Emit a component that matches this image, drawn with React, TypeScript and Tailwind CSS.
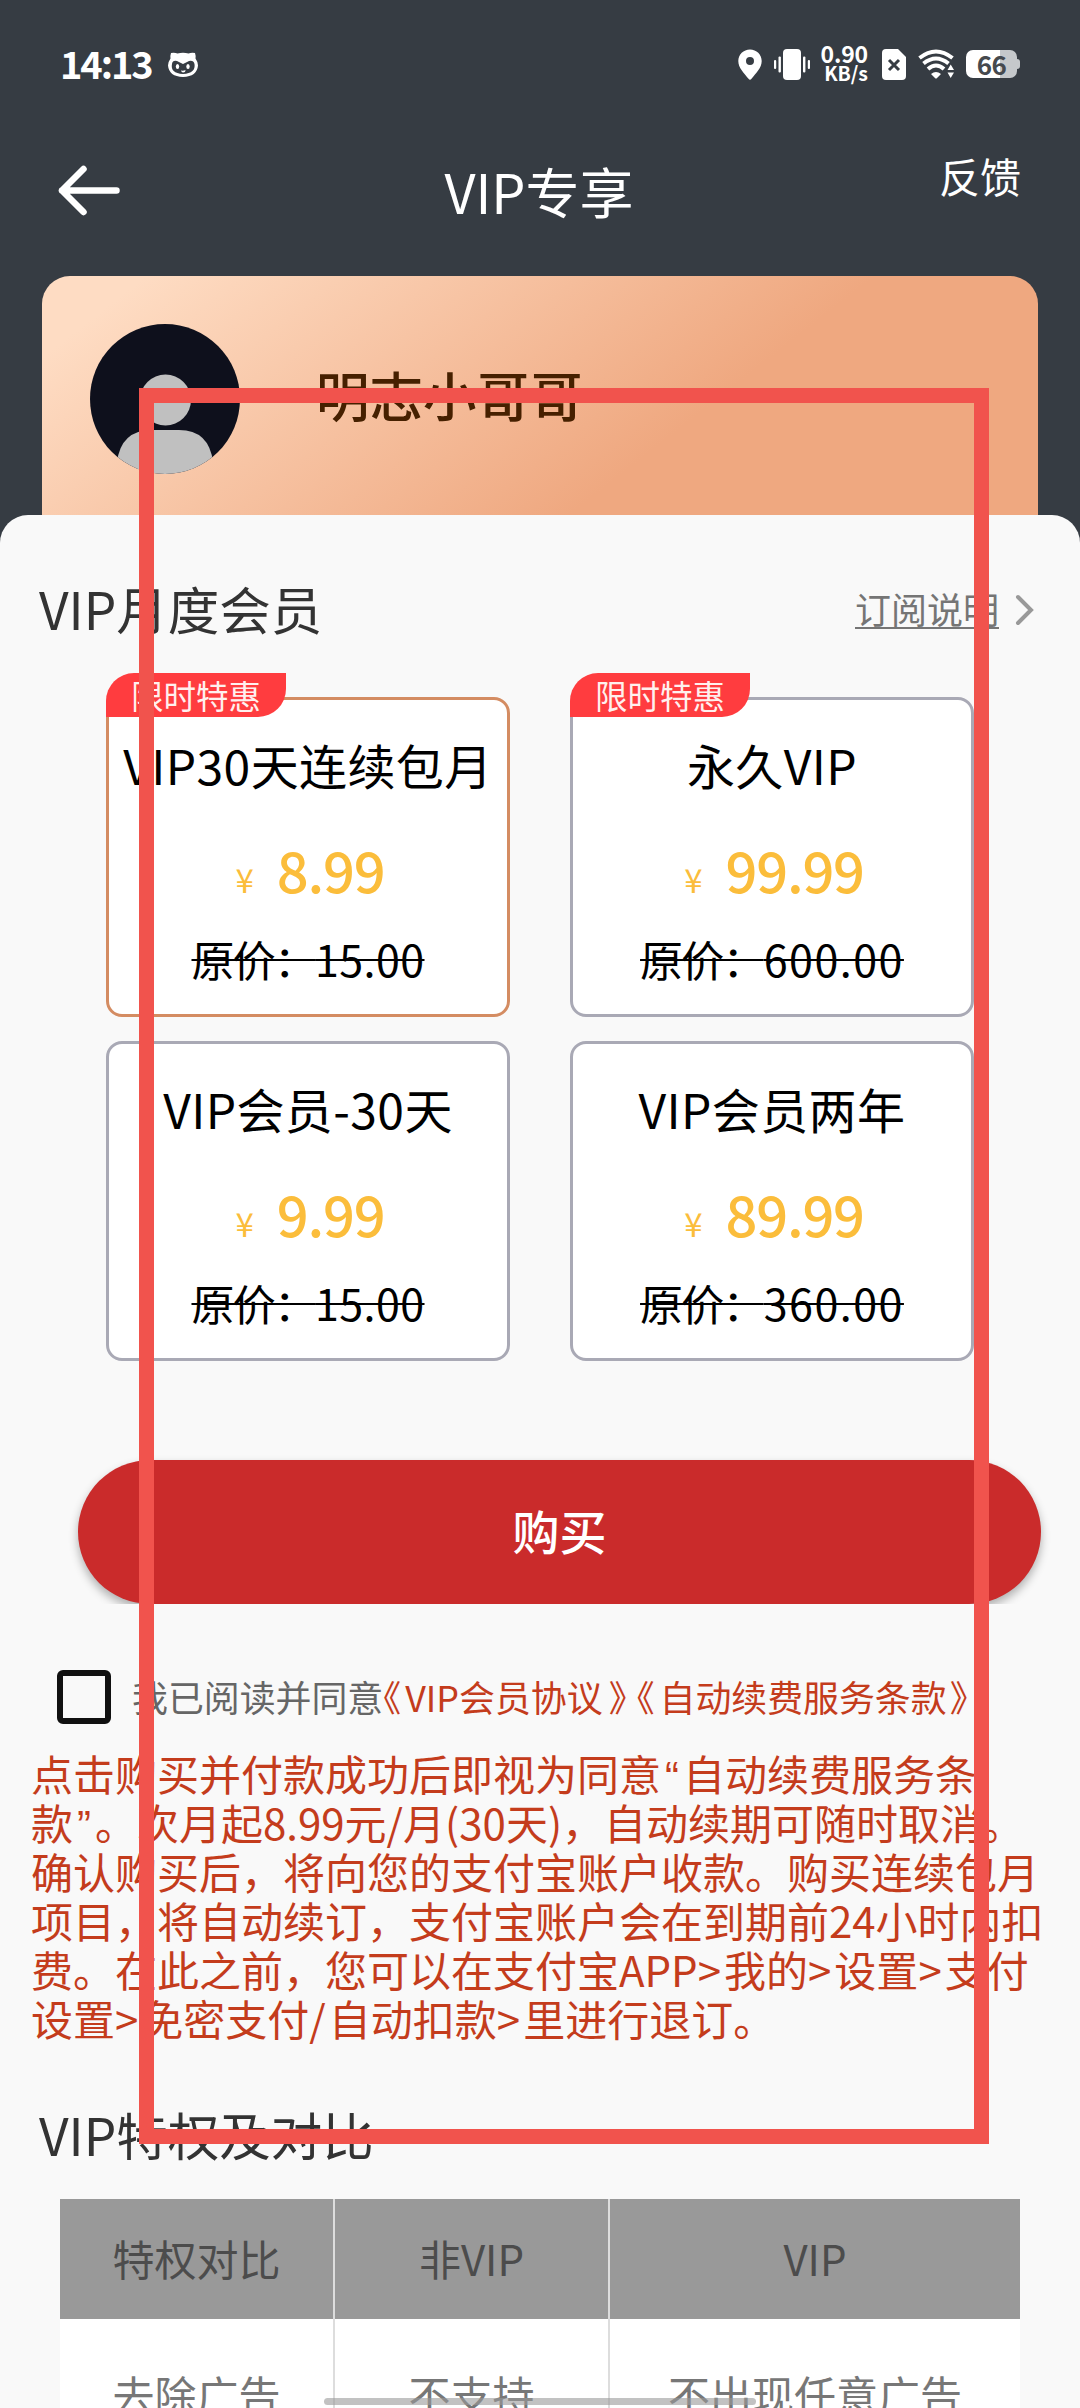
import { ReactNode } from 'react'

type Plan = {
  title: string
  price: string
  original: string
  tracking: string
  promo?: boolean
  active?: boolean
}

const plans: Plan[] = [
  { title: 'VIP30天连续包月', price: '8.99', original: '15.00', tracking: 'tracking-[0.4px]', promo: true, active: true },
  { title: '永久VIP', price: '99.99', original: '600.00', tracking: 'tracking-[1.5px]', promo: true },
  { title: 'VIP会员-30天', price: '9.99', original: '15.00', tracking: 'tracking-[0.4px]' },
  { title: 'VIP会员两年', price: '89.99', original: '360.00', tracking: 'tracking-[1.5px]' },
]

function StatusBar() {
  return (
    <div className="flex h-32 items-center justify-between pl-[60px] pr-[60px] text-white">
      <div className="flex items-center">
        <span className="mb-[3px] w-[108px] text-[38px] leading-none font-bold tracking-[-2.1px]">14:13</span>
        <svg width="30" height="25" viewBox="0 0 30 25">
          <path fill="white" d="M3 1 Q7 0.500 9.500 1.500 Q15 0 20.500 1.500 Q23 0.500 27 1 Q28 4 27.500 6.500 Q30 10 30 13.500 Q29 24.500 15 25 Q1 24.500 0 13.500 Q0 10 2.500 6.500 Q2 4 3 1Z" />
          <path fill="#363c43" d="M4 12 Q4.500 8 9 9 L15 12 L21 9 Q25.500 8 26.500 12 Q28 21 15 22 Q2 21 4 12Z" />
          <ellipse cx="9.500" cy="14.500" rx="1.700" ry="2.600" fill="white" />
          <ellipse cx="20" cy="14.500" rx="1.700" ry="2.600" fill="white" />
          <path fill="white" d="M13 18.500 Q15.500 19 17.500 18 Q17.500 20.500 15 20.500 Q13.500 20.500 13 18.500Z" />
        </svg>
      </div>
      <div className="flex items-center">
        <svg width="24" height="31" viewBox="0 0 24 31">
          <path fill="white" fillRule="evenodd" d="M12 0.500C5.500 0.500 0.300 5.500 0.300 12C0.300 19 6 24 10.500 29.800Q12 31.500 13.500 29.800C18 24 23.700 19 23.700 12C23.700 5.500 18.500 0.500 12 0.500ZM12 8A4 4 0 1 1 12 16A4 4 0 1 1 12 8Z" />
        </svg>
        <svg className="ml-3" width="36" height="31" viewBox="0 0 36 31" fill="white">
          <rect x="9" y="0" width="18" height="31" rx="4" />
          <rect x="0" y="11" width="2.200" height="9" rx="1" />
          <rect x="4.500" y="7.500" width="2.400" height="16" rx="1" />
          <rect x="29" y="7.500" width="2.400" height="16" rx="1" />
          <rect x="33.800" y="11" width="2.200" height="9" rx="1" />
        </svg>
        <div className="mb-[3px] ml-3 flex w-[46px] flex-col items-end font-bold">
          <span className="text-[23px] leading-[19px] tracking-[-0.2px]">0.90</span>
          <span className="text-[19.5px] leading-[19px]">KB/s</span>
        </div>
        <svg className="ml-[14px]" width="24" height="31" viewBox="0 0 24 31">
          <path fill="white" d="M4 0H16L24 8V27Q24 31 20 31H4Q0 31 0 27V4Q0 0 4 0Z" />
          <path d="M7 11L17 21M17 11L7 21" stroke="#363c43" strokeWidth="3" />
        </svg>
        <svg className="ml-3" width="37" height="30" viewBox="0 0 37 30">
          <path d="M1.500 9Q18 -4 34.500 9M5.500 14.500Q18 4.500 30.500 14.500M10 20Q18 13 26 20" fill="none" stroke="white" strokeWidth="4" />
          <path fill="white" d="M13 25Q18 21 23 25L18.500 29.500H17.500ZM29.500 21L32.700 15.500L36 21ZM29.500 23.500H36L32.700 29Z" />
        </svg>
        <div className="ml-[11px] flex items-center">
          <div className="flex h-7 w-[51px] items-center justify-center rounded-[7px] bg-linear-to-r from-white from-66% to-[#c5c8cb] to-66% text-[26px] font-bold text-[#45494e]">
            <span className="pb-px leading-none tracking-[-0.5px]">66</span>
          </div>
          <div className="h-[10px] w-[3px] rounded-r-sm bg-[#c5c8cb]" />
        </div>
      </div>
    </div>
  )
}

function PlanCard({ plan }: { plan: Plan }) {
  return (
    <div
      className={`relative flex h-80 flex-col items-center rounded-[16px] border-[3px] bg-white pt-8 whitespace-nowrap text-black ${
        plan.active ? 'border-[#d48c62]' : 'border-[#a9a9b5]'
      }`}
    >
      {plan.promo && (
        <div className="absolute -top-[27px] -left-[3px] flex h-11 w-[180px] items-center justify-center rounded-tl-[28px] rounded-br-[28px] bg-[#ff3c3f] text-[32.5px] text-[#fff0ee]">
          <span className="leading-none">限时特惠</span>
        </div>
      )}
      <div className="text-[48px] leading-[64px] tracking-[0.4px]">{plan.title}</div>
      <div className="mt-[41px] flex h-16 items-baseline pl-1 leading-[64px] text-[#fbbd3b]">
        <span className="mr-[23px] text-[33px]">¥</span>
        <span className="text-[56px] font-medium tracking-[-1.2px]">{plan.price}</span>
      </div>
      <div className="mt-[29px] text-[43px] leading-[56px] tracking-[-1.8px] line-through decoration-2">
        原价：<span className={plan.tracking}>{plan.original}</span>
      </div>
    </div>
  )
}

// Half-width book title marks
function Mark({ children, className }: { children: ReactNode; className: string }) {
  return <span className={`[font-feature-settings:'halt'] ${className}`}>{children}</span>
}

function Quote({ children }: { children: ReactNode }) {
  return <span className="inline-block w-[22px] text-center font-['Liberation_Sans']">{children}</span>
}

// Latin separators get a little extra room between the hanzi
function Sep({ children }: { children: ReactNode }) {
  return <span className="tracking-[3px]">{children}</span>
}

export default function App() {
  return (
    <div className="relative h-[2408px] w-[1080px] overflow-hidden bg-[#363c43] font-['Noto_Sans_CJK_SC',sans-serif]">
      <StatusBar />

      {/* Title bar */}
      <div className="flex h-[148px] items-start justify-between pr-[59px] pl-[58px] text-white">
        <svg className="mt-[37px]" width="62" height="51" viewBox="0 0 62 51" fill="none" stroke="white" strokeWidth="6.500" strokeLinecap="round" strokeLinejoin="round">
          <path d="M58.500 25.500H4M25.500 4L4 25.500L25.500 47" />
        </svg>
        <h1 className="mt-[25px] ml-[19px] text-[54px] leading-[76px]">VIP专享</h1>
        <span className="mt-[15px] text-[41px] leading-[64px]">反馈</span>
      </div>

      {/* Member card */}
      <div className="mx-[42px] flex h-[239px] rounded-t-[28px] bg-[linear-gradient(142deg,#fedcc3_8%,#efa880_64%)] pl-12">
        <svg className="mt-12" width="150" height="150" viewBox="0 0 150 150">
          <defs>
            <clipPath id="avatar">
              <circle cx="75" cy="75" r="75" />
            </clipPath>
          </defs>
          <g clipPath="url(#avatar)">
            <rect width="150" height="150" fill="#0e101c" />
            <circle cx="75.500" cy="76" r="25.500" fill="#c0c0c0" />
            <path d="M27 150V138Q31 106 62 106H89Q119 106 123 138V150Z" fill="#c0c0c0" />
          </g>
        </svg>
        <span className="mt-[80px] ml-[76px] text-[53.5px] leading-[76px] font-medium text-[#462000]">明志小哥哥</span>
      </div>

      <div className="h-[1893px] rounded-t-[28px] bg-[#f9f9f9]">
        <div className="flex h-[158px] items-start justify-between pr-[46px] pl-[39px]">
          <h2 className="mt-[58px] text-[51.5px] leading-[70px] text-[#333]">VIP月度会员</h2>
          <div className="mt-[67px] flex items-center text-[#757575]">
            <span className="border-b-2 border-[#757575] pt-[7px] text-[36px] leading-[38px]">订阅说明</span>
            <svg className="mt-2 ml-4" width="19" height="32" viewBox="0 0 19 32" fill="none" stroke="#999" strokeWidth="4" strokeLinecap="round">
              <path d="M3 3L16 16L3 29" />
            </svg>
          </div>
        </div>

        <div className="mt-6 ml-[106px] grid w-[868px] grid-cols-[404px_404px] gap-x-[60px] gap-y-6">
          {plans.map((plan) => (
            <PlanCard key={plan.title} plan={plan} />
          ))}
        </div>

        {/* The button's shadow is cut off at its lower edge */}
        <div className="mt-[79px] overflow-hidden pt-5 pr-[39px] pl-[78px]">
          <button className="block h-36 w-full rounded-full bg-[#ca2b2b] pb-1 text-[47px] font-medium text-white shadow-[0_5px_10px_rgba(0,0,0,0.3)]">
            购买
          </button>
        </div>

        <div className="mt-[66px] flex h-[54px] items-center pl-[57px] text-[35.9px] whitespace-nowrap text-[#c43c1c]">
          <div className="h-[54px] w-[54px] rounded-[6px] border-[6px] border-[#111]" />
          <div className="ml-[21px]">
            <span className="text-[#666]">我已阅读并同意</span>
            <Mark className="tracking-[4px]">《</Mark>VIP会员协议<Mark className="ml-[6px] tracking-[4px]">》</Mark>
            <Mark className="ml-[6px] tracking-[5px]">《</Mark>自动续费服务条款<Mark className="ml-[3px]">》</Mark>
          </div>
        </div>

        <div className="mt-[24px] ml-[31px] text-[42px] leading-[49px] whitespace-nowrap text-[#c43c1c]">
          <p className="h-[49px]">点击购买并付款成功后即视为同意<Quote>“</Quote>自动续费服务条</p>
          <p className="h-[49px]">款<Quote>”</Quote>。次月起8.99元/月(30天)，自动续期可随时取消。</p>
          <p className="h-[49px]">确认购买后，将向您的支付宝账户收款。购买连续包月</p>
          <p className="h-[49px]">项目，将自动续订，支付宝账户会在到期前24小时内扣</p>
          <p className="h-[49px]">费。在此之前，您可以在支付宝APP<Sep>&gt;</Sep>我的<Sep>&gt;</Sep>设置<Sep>&gt;</Sep>支付</p>
          <p className="h-[49px]">设置<Sep>&gt;</Sep>免密支付<Sep>/</Sep>自动扣款<Sep>&gt;</Sep>里进行退订。</p>
        </div>

        <h2 className="mt-[57px] ml-[39px] text-[51.5px] leading-[70px] text-[#333]">VIP特权及对比</h2>

        {/* Comparison table, runs past the bottom of the screen */}
        <div className="mt-[30px] ml-[60px] grid w-[960px] grid-cols-[275px_275px_410px] text-center text-[42px]">
          <div className="h-[120px] border-r-2 border-[#ddd] bg-[#999] leading-[118px] text-[#4c4c4c]">特权对比</div>
          <div className="h-[120px] border-r-2 border-[#ddd] bg-[#999] leading-[118px] text-[#4c4c4c]">非VIP</div>
          <div className="h-[120px] bg-[#999] leading-[118px] text-[#4c4c4c]">VIP</div>
          <div className="h-[150px] border-r-2 border-[#ddd] bg-white leading-[150px] text-[#777]">去除广告</div>
          <div className="h-[150px] border-r-2 border-[#ddd] bg-white leading-[150px] text-[#777]">不支持</div>
          <div className="h-[150px] bg-white leading-[150px] text-[#777]">不出现任意广告</div>
        </div>
      </div>

      {/* Highlight frame and gesture bar lie over everything */}
      <div className="absolute top-[388px] left-[139px] h-[1756px] w-[850px] border-[15px] border-[#f1534d]" />
      <div className="absolute top-[2398px] left-[324px] h-[7px] w-[432px] rounded-full bg-[#999]/60" />
    </div>
  )
}
